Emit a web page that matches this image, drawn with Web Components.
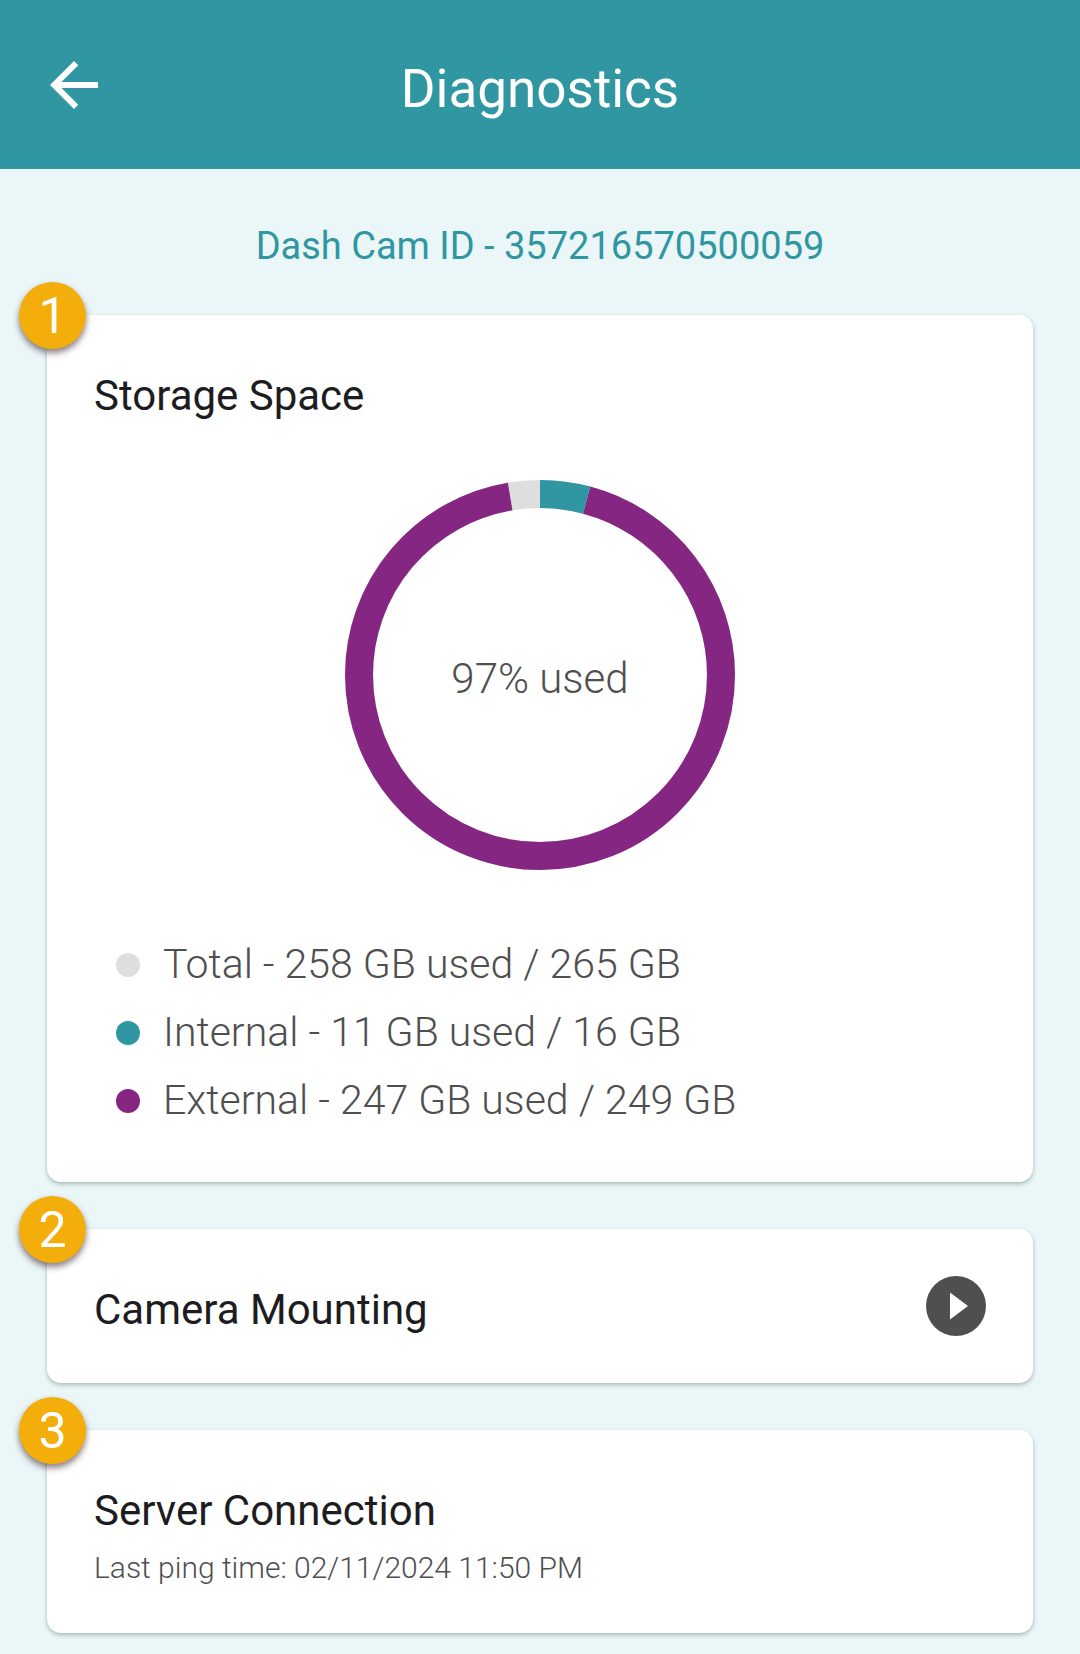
<!DOCTYPE html>
<html lang="en">
<head>
<meta charset="utf-8">
<meta name="viewport" content="width=device-width, initial-scale=1">
<title>Diagnostics</title>
<style>
  :root {
    --teal: #3096a2;
    --purple: #852683;
    --track: #dedede;
    --page: #eaf6f7;
    --ink: #1d1d1f;
    --muted: #4f4f4f;
    --badge: #f3ae0b;
  }
  body { margin: 0; background: var(--page); color: var(--muted); font-family: Roboto, "Liberation Sans", sans-serif; font-weight: 300; }
</style>
</head>
<body>
<diagnostics-page></diagnostics-page>
<script>
const define = (name, html, setup) => {
  const template = document.createElement('template');
  template.innerHTML = html;
  customElements.define(name, class extends HTMLElement {
    constructor() {
      super();
      this.attachShadow({ mode: 'open' }).append(template.content.cloneNode(true));
    }
    connectedCallback() {
      if (setup) setup(this, this.shadowRoot);
    }
  });
};

define('app-header', `
  <style>
    :host { display: block; background: var(--teal); color: #fff; }
    header { display: grid; grid-template-columns: 72px 1fr 72px; align-items: center; height: 169px; padding: 0 38px; box-sizing: border-box; }
    button { display: block; padding: 0; border: 0; background: none; color: inherit; cursor: pointer; }
    svg { display: block; width: 72px; height: 72px; }
    h1 { margin: 0; padding-top: 8px; font-size: 53px; line-height: 64px; font-weight: 400; text-align: center; }
  </style>
  <header>
    <button type="button" aria-label="Back">
      <svg viewBox="0 0 24 24" aria-hidden="true"><path fill="currentColor" d="M20 11H7.83l5.59-5.59L12 4l-8 8 8 8 1.41-1.41L7.83 13H20v-2z"/></svg>
    </button>
    <h1><slot></slot></h1>
  </header>`);

define('number-badge', `
  <style>
    :host { display: grid; place-items: center; width: 67px; height: 67px; border-radius: 50%; background: var(--badge);
      color: #fff; font-size: 50px; line-height: 60px; font-weight: 400; box-shadow: 0 4px 6px rgba(60, 40, 50, .6); }
  </style>
  <slot></slot>`);

define('info-card', `
  <style>
    :host { display: block; position: relative; padding: 47px; border-radius: 14px; background: #fff; box-shadow: 0 2px 4px rgba(30, 60, 50, .32); }
    ::slotted(number-badge) { position: absolute; left: -28px; top: -33px; }
  </style>
  <slot name="badge"></slot>
  <slot></slot>`);

define('card-title', `
  <style>
    :host { display: block; color: var(--ink); }
    h2 { margin: 0; padding-top: 8px; font-size: 42px; line-height: 52px; font-weight: 400; }
  </style>
  <h2><slot></slot></h2>`);

define('usage-ring', `
  <style>
    :host { display: grid; place-items: center; margin: 58px 0 61px; }
    svg, span { grid-area: 1 / 1; }
    svg { width: 390px; height: 390px; }
    circle { fill: none; stroke-width: 28; }
    span { padding-top: 8px; font-size: 42px; line-height: 52px; }
  </style>
  <svg viewBox="0 0 390 390" aria-hidden="true">
    <g transform="rotate(-90 195 195)">
      <circle cx="195" cy="195" r="181" stroke="var(--track)"/>
      <circle id="external" cx="195" cy="195" r="181" stroke="var(--purple)"/>
      <circle id="internal" cx="195" cy="195" r="181" stroke="var(--teal)"/>
    </g>
  </svg>
  <span><slot></slot></span>`, (host, root) => {
  const { total, internal, external } = host.dataset;
  const arc = (id, start, size) => {
    const circle = root.getElementById(id);
    circle.setAttribute('pathLength', total);
    circle.setAttribute('stroke-dasharray', size + ' ' + (total - size));
    circle.setAttribute('stroke-dashoffset', -start);
  };
  arc('internal', 0, Number(internal));
  arc('external', Number(internal), Number(external));
});

define('legend-row', `
  <style>
    :host { display: flex; align-items: center; gap: 23px; min-height: 68px; padding-left: 22px; font-size: 41px; line-height: 52px; }
    i { flex: none; width: 24px; height: 24px; border-radius: 50%; background: var(--dot); }
    span { padding-bottom: 2px; }
  </style>
  <i></i><span><slot></slot></span>`);

define('play-button', `
  <style>
    :host { display: block; flex: none; }
    button { display: block; padding: 0; border: 0; border-radius: 50%; background: none; color: var(--muted); cursor: pointer; }
    svg { display: block; width: 60px; height: 60px; }
  </style>
  <button type="button" aria-label="Open camera mounting">
    <svg viewBox="2 2 20 20" aria-hidden="true"><path fill="currentColor" d="M12 2a10 10 0 1 0 0 20 10 10 0 0 0 0-20zM10 16.5v-9l6 4.5z"/></svg>
  </button>`);

define('diagnostics-page', `
  <style>
    :host { display: block; }
    main { display: flex; flex-direction: column; gap: 47px; padding: 56px 47px 20px; }
    .device { margin: 0; font-size: 38px; line-height: 43px; font-weight: 400; text-align: center; color: var(--teal); }
    .row { display: flex; justify-content: space-between; align-items: center; gap: 24px; }
    .ping { margin: 12px 0 0; font-size: 30px; line-height: 37px; }
  </style>
  <app-header>Diagnostics</app-header>
  <main>
    <p class="device">Dash Cam ID - 357216570500059</p>
    <info-card>
      <number-badge slot="badge">1</number-badge>
      <card-title>Storage Space</card-title>
      <usage-ring data-total="265" data-internal="11" data-external="247">97% used</usage-ring>
      <legend-row style="--dot: var(--track)">Total - 258 GB used / 265 GB</legend-row>
      <legend-row style="--dot: var(--teal)">Internal - 11 GB used / 16 GB</legend-row>
      <legend-row style="--dot: var(--purple)">External - 247 GB used / 249 GB</legend-row>
    </info-card>
    <info-card>
      <number-badge slot="badge">2</number-badge>
      <div class="row"><card-title>Camera Mounting</card-title><play-button></play-button></div>
    </info-card>
    <info-card>
      <number-badge slot="badge">3</number-badge>
      <card-title>Server Connection</card-title>
      <p class="ping">Last ping time: 02/11/2024 11:50 PM</p>
    </info-card>
  </main>`);
</script>
</body>
</html>
